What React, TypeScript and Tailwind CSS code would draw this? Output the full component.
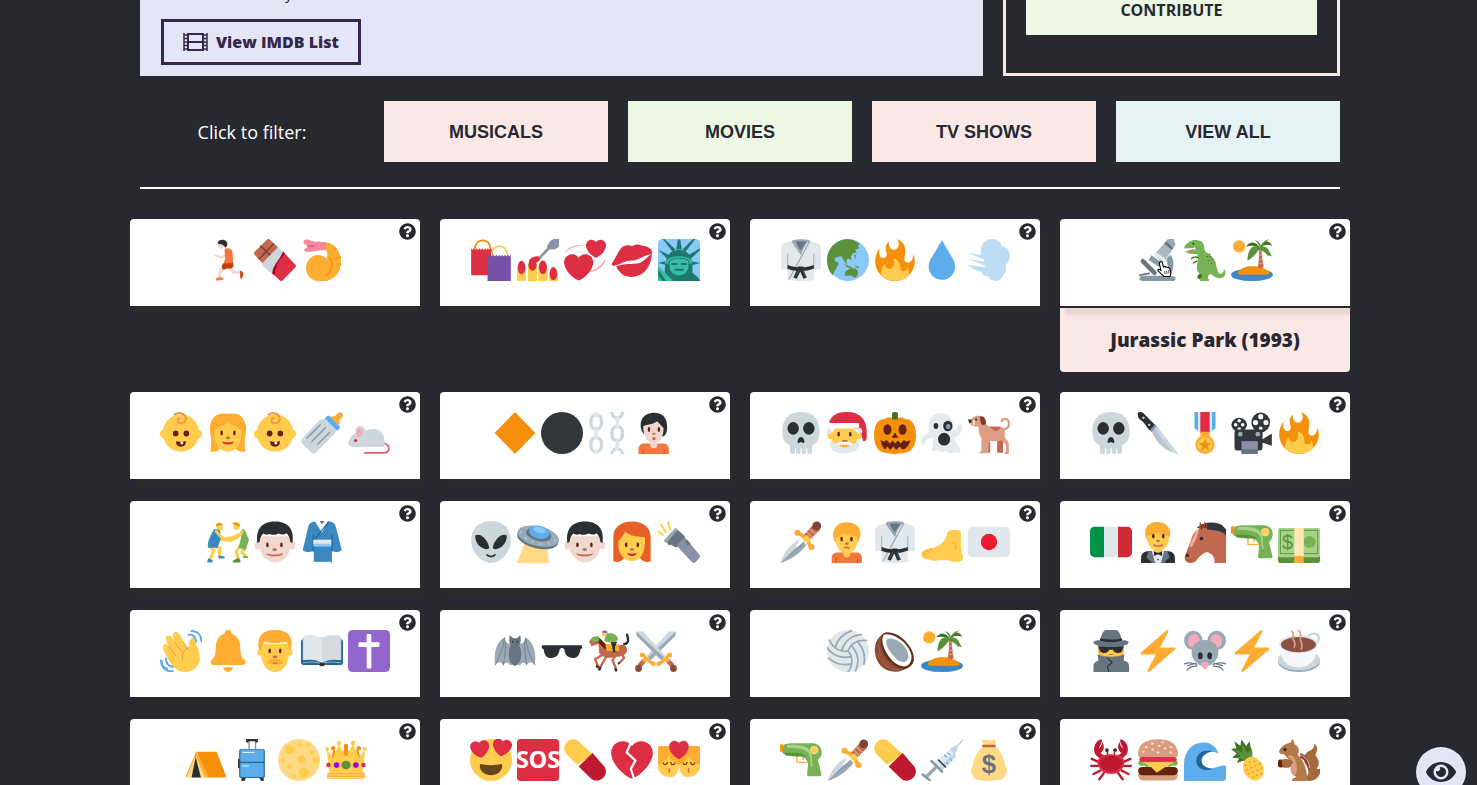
import type { ReactNode } from "react";
import { FaEye, FaQuestionCircle } from "react-icons/fa";

type ShapeProps = { f: string; d: string };
const P = ({ f, d }: ShapeProps) => <path fill={f} d={d} />;
const S = ({ f, d, w = 1 }: ShapeProps & { w?: number }) => (
  <path fill="none" stroke={f} strokeWidth={w} strokeLinecap="round" strokeLinejoin="round" d={d} />
);
const E = ({ f, x, y, a, b = a }: { f: string; x: number; y: number; a: number; b?: number }) => (
  <ellipse fill={f} cx={x} cy={y} rx={a} ry={b} />
);
const R = ({ f, x, y, w, h, r = 0 }: { f: string; x: number; y: number; w: number; h: number; r?: number }) => (
  <rect fill={f} x={x} y={y} width={w} height={h} rx={r} />
);

const HEART =
  "M35.885 11.833c0-5.45-4.418-9.868-9.867-9.868-3.308 0-6.227 1.633-8.018 4.129-1.791-2.496-4.71-4.129-8.017-4.129-5.45 0-9.868 4.417-9.868 9.868 0 .772.098 1.52.266 2.241C1.751 22.587 11.216 31.568 18 34.034c6.783-2.466 16.249-11.447 17.617-19.959.17-.721.268-1.469.268-2.242z";

const Eyes = ({ y, l = 13, r = 23 }: { y: number; l?: number; r?: number }) => (
  <>
    <E f="#662113" x={l} y={y} a={1.1} b={2.1} />
    <E f="#662113" x={r} y={y} a={1.1} b={2.1} />
  </>
);

const baby = (
  <>
    <E f="#ffcc4d" x={2.8} y={18.8} a={2.8} b={3.4} />
    <E f="#ffcc4d" x={33.2} y={18.8} a={2.8} b={3.4} />
    <E f="#ffcc4d" x={18} y={18} a={15.6} b={16} />
    <S f="#ef9645" w={1.7} d="M12.5 2.2c3.5-2.4 9-1.2 9.6 3 .5 3.400-3 5.400-5.600 4.200-2.300-1.100-1.800-4 .3-4" />
    <E f="#662113" x={13.4} y={18.4} a={2.4} b={2.6} />
    <E f="#662113" x={22.6} y={18.4} a={2.4} b={2.6} />
    <P f="#662113" d="M14 24.800c2.500 1 5.500 1 8 0 .7 2.800-1 4.900-4 4.900s-4.700-2.100-4-4.900z" />
    <R f="#fff" x={17.6} y={25.300} w={2.200} h={2.400} r={0.4} />
  </>
);

const fire = (
  <>
    <P f="#f4900c" d="M35 19c0-2.062-.367-4.039-1.04-5.868-.46 5.389-3.333 8.157-6.335 6.868-2.812-1.208-.917-5.917-.777-8.164.236-3.809-.012-8.169-6.931-11.794 2.875 5.5.333 8.917-2.333 9.125-2.958.231-5.667-2.542-4.667-7.042-3.238 2.386-3.332 6.402-2.333 9 1.042 2.708-.042 4.958-2.583 5.208-2.84.28-4.418-3.041-2.963-8.333C2.52 10.965 1 14.805 1 19c0 9.389 7.611 17 17 17s17-7.611 17-17z" />
    <P f="#ffcc4d" d="M28.394 23.999c.148 3.084-2.561 4.293-4.019 3.709-2.106-.843-1.541-2.291-2.083-5.291s-2.625-5.083-5.708-6c2.25 6.333-1.247 8.667-3.08 9.084-1.872.426-3.753-.001-3.968-4.007C7.352 23.668 6 26.676 6 30c0 .368.023.73.055 1.09C9.125 34.124 13.342 36 18 36s8.875-1.876 11.945-4.91c.032-.36.055-.722.055-1.09 0-2.187-.584-4.236-1.606-6.001z" />
  </>
);

const gi = (
  <>
    <P f="#e1e8ed" d="M11 1.500 4 3.600C2 4.300 1 5.500 1 8v18h5.500v9.200c6 1.100 16 1.100 22.500 0V26H35V8c0-2.500-1-3.700-3-4.400L25 1.500z" />
    <P f="#66757f" d="M12.500 1.500h11L18 12z" />
    <P f="#99aab5" d="M11 .8C15 0 21 0 25 .8l1 1.700-1.700.500C20 1.700 16 1.700 12.500 2.500l6.500 9.300-1.200 2L10 2.500z" />
    <S f="#99aab5" w={1} d="M25.500 2 8 34M24 1.500l-6.500 9" />
    <S f="#99aab5" w={0.8} d="M6.600 13v12.500M29 13v12.500" />
    <P f="#292f33" d="M6.500 22.300c6.500 2.700 16 2.700 22.500 0v3c-3.500 1.500-6 1.900-8.500 2l2.500 5.800-3 1-2.600-6.200-3.100 6.200-2.800-1.100 2.500-5.700c-3 0-5.300-.6-7.500-1.700z" />
    <R f="#292f33" x={15} y={23.500} w={5.400} h={4.500} r={1} />
    <S f="#66757f" w={0.5} d="m16 27-2.500 5M19.500 27l2.500 5" />
  </>
);

const island = (
  <>
    <E f="#3b88c3" x={18} y={30.600} a={18} b={5.400} />
    <P f="#f4900c" d="M6 28.500c2-3.500 7-5.200 12.500-5.200S30 25 33 28.500c.5 1.600-2 2.200-4 2.200H10c-2.500 0-4.700-.600-4-2.200z" />
    <E f="#ffac33" x={7} y={6.300} a={5.200} />
    <P f="#c1694f" d="M23.500 7h3c-.6 6 .3 11 1.500 16.500-1 2-4 2-5 .5 1.200-6 1.300-11 .5-17z" />
    <S f="#e5a189" w={0.8} d="m23.800 10 3 .8M24 13.500l3 .8M23.800 17l3.500.8M23.500 20.500l4 .8" />
    <P f="#5c913b" d="M24.500 7.500C19 4 14.500 8 14 18.500c3.500-1.600 7-5 10-9.500 4 1.500 7 2.500 7.500 6 3.500-4-.4-9.500-6-8.500z" />
    <P f="#3e721d" d="M24.800 7.800C22 2.500 17 .7 12.800 6.500c4.700-1.200 8-.9 12 1.300 3.500-3 6.700-3.600 10.500-1.800C33 .2 26.700.8 24.800 7.800z" />
    <P f="#5c913b" d="M24.800 7c-1.500-3.200-3-5-4.500-6 3 .3 5 2.400 5.400 5.500C27.500 2.500 29.500.5 33 .2c-3.500 1.600-4.700 4.500-6.600 7.300 2.600-.3 6 .5 8.600 7.500-3.200-.9-6-2.700-8.500-6z" />
  </>
);

const skull = (
  <>
    <P f="#ccd6dd" d="M34 16C34 6 28 0 18 0S2 6 2 16c0 6 1 10 6.500 12.500V34c0 2.700 4.300 2.700 4.300.2v-2.700c0-1 1-1 1 0V34c0 2.700 3.800 2.700 3.800 0v-2.500c0-1 1-1 1 0V34c0 2.700 3.800 2.700 3.800 0v-2.500c0-1 1-1 1 0v2.700c0 2.500 4.100 2.500 4.100-.2v-5.500C33 26 34 22 34 16z" />
    <E f="#292f33" x={11.300} y={14} a={4.900} b={5.400} />
    <E f="#292f33" x={24.700} y={14} a={4.900} b={5.400} />
    <P f="#292f33" d="M18 21.500c2 0 3.300 3.300 2.800 4.600-.8 1-2 0-2.800-.300-.8.300-2 1.300-2.800.3-.5-1.300.8-4.600 2.800-4.600z" />
  </>
);

const boy = (
  <>
    <E f="#f1d8cf" x={3} y={21} a={2.500} b={3.500} />
    <E f="#f1d8cf" x={33} y={21} a={2.500} b={3.500} />
    <P f="#f1d8cf" d="M4 13h28c1 12-4 22-14 22.500C8 35 3 25 4 13z" />
    <P f="#292f33" d="M3 19C1.500 9 5 .5 18 .5S34.500 9 33 19l-2-1.500c0-3.500-1.500-5-3-7-2 1.500-5 1.200-7 .2-2 1.300-5.500 1.500-7.500.4-2 1.100-4 .8-5.500-.3-2 2-3 4-3 6.700z" />
    <Eyes y={20.500} l={11.500} r={23.500} />
    <E f="#c1694f" x={17.700} y={24.500} a={2} b={1.200} />
    <P f="#c1694f" d="M10.500 27.600c4 1.500 10.500 1.500 14.500 0-.5 3.600-14 3.600-14.500 0z" />
  </>
);

const dagger = (
  <>
    <P f="#ccd6dd" d="M17 15.500C8 21 3 27 .5 36L12 26z" />
    <P f="#99aab5" d="M22.500 20.500C17 28 9 33 .5 36L20 17.500z" />
    <P f="#8899a6" d="M14 23 1 35.500 21 19z" />
    <P f="#c1694f" d="m20 12.500 9-10 5.500 5-10 9.500z" />
    <S f="#e5a189" w={1.200} d="m23 9.500 5 5M25.500 7l4.500 4" />
    <E f="#804434" x={31.500} y={4.200} a={3.800} />
    <S f="#ffac33" w={3.200} d="M15.500 10.500c4 1.500 8 5 10.500 11" />
    <E f="#ffac33" x={15} y={10} a={2.600} />
    <E f="#ffac33" x={27} y={22.300} a={2.600} />
    <P f="#ffcc4d" d="m23 12 4 3.500-3.500 4-4.500-4z" />
  </>
);

const pistol = (
  <>
    <S f="#ffac33" w={1.200} d="M14.500 13v7h8.500M19 13.500l1 4" />
    <P f="#77b255" d="M3 5Q6 3.600 9 3.600H28C33 4 36 7 35.700 12c-.2 3-1.700 4.500-3.200 6l3 12c.3 1.500-.5 2-2 2H25c-1.500 0-2-.8-1.700-2.200l.7-8C23.500 17 20 14.500 14 14H5L2 12z" />
    <P f="#a6d388" d="M6 5.200c8-.6 15 .3 18.500 3.300 4 3.500 2.500 9.500 3.500 15.500h-1.500c-.7-6 0-10-2.800-12.700C20.500 8.500 14 7.500 6 7.500z" />
    <P f="#5c913b" d="M4 11.800h9c4 0 7.500 1.200 9.500 3.200H14l-9-.8z" />
    <R f="#f4900c" x={0} y={4.500} w={2.800} h={6.500} r={1} />
    <E f="#ffd983" x={29.300} y={9.500} a={3.600} />
    <E f="#ffcc4d" x={29.300} y={9.500} a={2.500} />
  </>
);

const pill = (
  <>
    <P f="#ffcc4d" d="M11 22 2.200 13C-.8 9.500-.2 5.500 2.700 2.500 5.500-.3 10-.6 13 2.300l12 11.200z" />
    <P f="#be1931" d="m12.500 23.500 12-11.500L34 23c2.700 3 2.500 7.300-.4 10.300-3 3-7.300 3.300-10.500.5z" />
  </>
);

const zap = (
  <P f="#ffac33" d="M32.938 15.651C32.792 15.26 32.418 15 32 15H19.925L26.89 1.458c.219-.426.106-.947-.271-1.243C26.437.071 26.218 0 26 0c-.233 0-.466.082-.653.243L18 6.588 3.347 19.243c-.316.273-.43.714-.284 1.105S3.582 21 4 21h12.075L9.11 34.542c-.219.426-.106.947.271 1.243.182.144.401.215.619.215.233 0 .466-.082.653-.243L18 29.412l14.653-12.655c.317-.273.43-.714.285-1.106z" />
);

const chain = (x: number, flip: boolean) => (
  <>
    {(flip ? [-7, 12.500, 31.500] : [2.500, 22]).map((y) => (
      <rect key={y} x={x - 4.500} y={y} width={9} height={12} rx={4.500} fill="none" stroke="#ccd6dd" strokeWidth={2.800} />
    ))}
    {(flip ? [3.500, 22.500] : [-6, 12.500, 32]).map((y) => (
      <R key={y} f="#e1e8ed" x={x - 1.600} y={y} w={3.200} h={11} r={1.600} />
    ))}
  </>
);

const shoulders = (skin: string, x: number) => (
  <g transform={`translate(${x - 16} 0)`}>
    <P f="#f4783c" d="M3 36v-4c0-3.500 2-5 5-5h16c3 0 5 1.500 5 5v4z" />
    <S f="#c94e1d" w={0.7} d="M7 32v4M25 32v4" />
    <R f={skin} x={13} y={23} w={6} h={8} r={3} />
  </g>
);

const sword = (
  <>
    <P f="#ccd6dd" d="M1 1.500 6.500 1 26 22l-3.500 4L1.500 5z" />
    <P f="#99aab5" d="M1 1.500 25 23.500 22.500 26 1.500 5z" />
    <S f="#ffac33" w={2.600} d="M20.500 28.500c2-.5 6-4 8.500-7.500" />
    <E f="#ffac33" x={20.300} y={29} a={2} />
    <E f="#ffac33" x={30} y={21.500} a={2} />
    <P f="#c1694f" d="m26.500 27 2.500-2.500 5 5-3 3z" />
    <E f="#8a4b38" x={33} y={33} a={2.900} />
    <E f="#ffac33" x={28} y={26} a={1.500} />
  </>
);

const kissFace = (
  <>
    <R f="#ffac33" x={0} y={6} w={18} h={18} r={1.500} />
    <P f="#ffcc4d" d="M0 22c5-1.500 8-4 9-8 2 4 5 6.500 9 8-.5 5-2 10-6.500 10.500C5 33 1 29 0 25z" />
    <S f="#662113" w={0.900} d="M4.500 20.500c.5 2 3 2 3.500-.5M11 20c.5 2.500 3 2.500 3.500.5" />
    <P f="#e0664f" d="M9 25c2 0 2 1.500 1 2 1 .6 1 2.300-1 2z" />
  </>
);

const volleyballPanel = (
  <S f="#99aab5" w={1.500} d="M18 18C20 12 26 8 34 9M12.500 17.800C15 10 21 4.500 29.500 4M7 15C9 8 14 3 21 .5" />
);

const tRexSpots = [
  [20, 15], [22.500, 15], [24.500, 17.500], [21, 18.500], [26.500, 20], [23.500, 21], [22, 13],
];
const bunSeeds = [
  [8, 7], [13, 4], [13.500, 9], [19, 6], [22, 3], [24, 8], [29, 7], [5.500, 11], [18, 11.500], [29, 11.500],
];
const moonSpots: [number, number, number][] = [
  [10, 9, 4], [18.500, 5, 2], [20, 17.500, 3.600], [10, 23.500, 1.900], [22, 29, 4.200], [32.500, 18.500, 2.600],
  [29, 11, 1.800], [4, 18, 1.600], [14, 32, 1.700], [26, 4.500, 1.800],
];

const art: Record<string, ReactNode> = {
  baby, fire, gi, island, skull, boy, dagger, pistol, pill, zap,
  runner: (
    <>
      <S f="#f1d8cf" w={1.900} d="m7.300 14.200 5 1.800 4.500-2.500M20.500 10l1.500 6-2 4" />
      <S f="#f1d8cf" w={2.600} d="M14 24l-2.500 4-1 5M20 25l3 3.500h6" />
      <P f="#f4783c" d="M15 8.500c3-1.500 6-.3 6.700 2.500L22.500 22c-1 1.500-7 1.800-8.500.5l1.500-6z" />
      <P f="#c63d10" d="M14 20.800h8.500c.5 3-.3 4.500-3 4.500h-2.200l-3 1c-2-1-2-3.500-.3-5.500z" />
      <P f="#f4783c" d="M8 33.500c2-.6 3.500-1.300 6 0v1.500c-2 .2-4.300.7-6.500.6z" />
      <P f="#c94e1d" d="M28.200 27.500c1.500 0 3 .3 3 2.500-.3 1.800-.6 3-1.500 4l-1.200-.4z" />
      <E f="#f1d8cf" x={12} y={5} a={2.500} b={3.400} />
      <P f="#292f33" d="M9.300 2.500C11 0 15 0 16.700 2.200c1.500 2 .8 4.500-1.200 5.200-1-2.500-3-3.200-6.200-3.300z" />
    </>
  ),
  chocolate: (
    <>
      <P f="#c1694f" d="M.4 11.200 11 .6c.8-.8 1.800-.8 2.600 0L21 7.500 8 21.500.4 13.500c-.6-.7-.6-1.600 0-2.300z" />
      <S f="#804434" w={1.500} d="M5.800 6.200 15 15M16.500 4.500 4.500 17" />
      <P f="#ccd6dd" d="M20.500 7 26 11.500 16 30.500 7.500 23c-1-1-.3-1.500-.3-2.500z" />
      <P f="#dd2e44" d="m25 11 10.500 11c.7.7.7 1.500 0 2.200L24.500 35.500c-.6.6-1.500.6-2.100 0L15.700 29.500z" />
      <P f="#a0041e" d="m25 11 1.500 1.500c-5 5-7.500 10-9 18.300l-1.800-1.300c.3-7 5.300-10 9.300-18.500z" />
    </>
  ),
  shrimp: (
    <>
      <P f="#ffac33" d="M20 2.600C28 3 34.300 10 34.300 19.500 34.300 29 28 36 19.500 36H15C9 36 4.300 31 4.300 25S9 13.800 14.500 13.800c3 0 5.500 1 7.500 3 1-4 .5-8-2.500-8.300z" />
      <P f="#f4900c" d="M23 14c4 6 4 14-3.500 18 7 0 9-8 6.500-15zM27.500 17.500l6.500-3v1.500zM30 21l4.300.3v1.500zM27 10l3-3 .8.900z" />
      <P f="#f4899f" d="M2.500 1.500C4-.2 6.500.2 8.500 1.500c4 1.400 7 .6 12.500 1.300.8 2 .3 4.500-1 7.200-5-1-7.500 1.200-12.500 1C4 11.500 2 10.500 3 8.500L7 6 3 4.500c-1-.8-1.200-2-.5-3z" />
      <S f="#dd5a77" w={1.200} d="M5.500 6h5" />
    </>
  ),
  bags: (
    <>
      <S f="#f4900c" w={1.500} d="M4 9c0-10 13.500-11 13.500 0" />
      <P f="#dd2e44" d="M1 8l1.200 1.500L3.400 8l1.200 1.500L5.800 8 7 9.500 8.200 8l1.200 1.500L10.600 8l1.200 1.500L13 8l1.200 1.500L15.400 8l1.200 1.500L17.800 8l1.700 1.500V31H1z" />
      <S f="#ffcc4d" w={1.500} d="M18.500 14c0-10.500 13.500-10.500 13.500 0" />
      <P f="#7450a8" d="M15 13.500l1.200 1.500 1.300-1.500 1.200 1.500 1.300-1.500 1.200 1.500 1.300-1.500 1.200 1.500 1.300-1.500 1.200 1.500 1.300-1.500 1.200 1.500 1.300-1.500 1.200 1.500 1.300-1.500 1.200 1.500 1.300-1.500V36H15z" />
    </>
  ),
  nails: (
    <>
      <P f="#ffcc4d" d="M0 27c0-6 7.500-6 7.500 0v9H0zM9.300 24c0-6 8-6 8 0v12h-8zM18.300 26c0-6 8-6 8 0v10h-8zM27.500 30c0-4 7.500-4 7.500 0v6h-7.500z" />
      <E f="#dd2e44" x={3.900} y={24.500} a={3.300} b={5.800} />
      <E f="#dd2e44" x={13.300} y={22} a={3.500} b={5.200} />
      <E f="#dd2e44" x={22.200} y={24.300} a={3.400} b={5.800} />
      <E f="#dd2e44" x={31.200} y={29.700} a={3.200} b={5.600} />
      <P f="#dd2e44" d="M10.500 19c.5-3 3-3 5-4 2-.8 5 0 5 1.500-1 2.500-3 3.500-5.500 4.500z" />
      <S f="#8899a6" w={2.400} d="M20 15.500 28 7" />
      <P f="#8a91a6" d="M25.800 7c.5-3 3.500-7 6.200-7h4v6c-1 2-3.500 3.500-7.500 3z" />
    </>
  ),
  hearts: (
    <>
      <P f="#f4abba" d="M.5 12C3 6.500 11 4 19 5.500 11 5.500 5 7.500.5 12zM36 16c-1.500 8-8 12.500-15 12 6-2 11-5 15-12z" />
      <g transform="translate(0 11.700) scale(.7)"><P f="#dd2e44" d={HEART} /></g>
      <g transform="translate(18.800 -.2) scale(.48)"><P f="#dd2e44" d={HEART} /></g>
    </>
  ),
  lips: (
    <>
      <P f="#dd2e44" d="M.5 21.500C3 18 6 11 9 7.500c2.500-2.500 6-2.700 9.500-1.500 2.500-1.700 5-1.700 7.500-.5 4 .5 7.500 1.500 9 4.500.5 12-6 22.500-18 22.500-7 0-10-4-13-9.500-1.500.5-3.500 0-3.500-1.500z" />
      <P f="#fff" d="M3 22.700c5-.4 8.500-4.400 14.500-4.200 6 0 10.500-5 17.500-5.500-4 1.500-6.500 7-13 8C14.500 22 10 20.500 3.500 24z" />
    </>
  ),
  liberty: (
    <>
      <R f="#88c9f9" x={0} y={0} w={36} h={36} r={4} />
      <P f="#1b7a6c" d="M10 14 0 9l9 9zM12.500 11 4 0h1.500l9.500 9zM15.500 9 17 .5h2L20.500 9zM21 9l9-9h2l-8.500 11zM26 14l10-6v1.500L27 18zM6 19l-6 1.500L6 22zM29 19l7 1.500-7 2z" />
      <P f="#1b7a6c" d="M6 36C5 20 7 9.500 18 9.500S30 20 29.500 29c2.500 2 5 4 6.500 6v1H6z" />
      <P f="#37bda4" d="M7 19c3-5.500 19-5.500 22 0v2H7z" />
      <P f="#1b7a6c" d="M9 19c3-4 15-4 18 0v2H9z" />
      <P f="#37bda4" d="M10 19c4-3 12-3 16 0v6c-1.500 4-4 6-8 6s-7-2-8-6zM0 23l4 4 9 9H0z" />
      <P f="#1b7a6c" d="M11.500 20.500h5v1.800h-5zM19.500 20.500h5v1.800h-5zM14 25.500h8v1.700h-8zM0 26l7 10H4L0 31z" />
    </>
  ),
  globe: (
    <>
      <E f="#88c9f9" x={18} y={18} a={18} />
      <P f="#5c913b" d="M12 1c3-1 8-1 11 0 2 1 3 2 5 3l-1.500 2 1 2-3.500 1 1.500 2.500-3 .5-2 3 .5 3.500-3-2-1.500 2 1 4-3-4-2.500-4-3 1-2.500 1 .5 2.500 3 1.500C8.500 25 7 26 5 31 1.500 28 0 23 0 18c0-8 5-14.500 12-17z" />
      <P f="#5c913b" d="M15.500 28c2-1 3-3 5-2.800 2-.7 3 .5 4-.2 1 1.500 2.500 3 2.200 4.500-.7 2-1.500 3.500-3.200 3.500l-3-1.800-5 .5zM15 21.500l3 1.500 4 1.500-1 .8-4-1.300zM23 22.500l4 1.200v1.800zM23 14l1.500-1v4.500z" />
    </>
  ),
  droplet: <P f="#5dadec" d="M18 1 8.200 17.400C3.800 25.500 9 35 18 35s14-9.500 9.500-17.600z" />,
  wind: <P f="#bdddf4" d="M11 13.500C10 4.500 15 0 20.500 0c5 0 8 3 8.500 6.200 4.500.3 7 4 7 8 0 3.500-1.500 6.500-4 8 1.500 3 .5 7-2 9-1 3-3 4.800-6 4.800-3.500 0-5-1-6.500-4-3 .5-5-.8-6-4C7 27.500 3.500 25 0 22l14.500 2.200v-1.500L0 17.200l14 2.400v-1.800L0 12z" />,
  microscope: (
    <>
      <P f="#8899a6" d="M3 32c3-.8 17-.4 18-.5 7-3 6-11 3.500-14l4-4c5 6 2 15.500-1 18.500 4.500-.2 5.500 0 5.500 2 0 1.600-1 2-2.500 2H5c-2.500 0-4-1-2-4z" />
      <S f="#66757f" w={3.800} d="M5 19 15 29" />
      <S f="#66757f" w={1.500} d="m2.500 31 8-1.500" />
      <P f="#aab8c2" d="m15 13 8-9 7 6-8.500 11z" />
      <P f="#8899a6" d="m12.500 14 9.500 7-3 3-9-6z" />
      <P f="#e1e8ed" d="m16 11 10 7-2 2.500L14 13.500z" />
      <P f="#99aab5" d="m23 4 3.500-4 5 0 1.500 5-3.500 5z" />
      <P f="#66757f" d="m25 2 6 6-1 1.300L23.500 4z" />
    </>
  ),
  trex: (
    <>
      <P f="#3e721d" d="M13 22c-3 4 0 5.500 1 7l-2.500 3c-.7 2 1 2.500 3.500 2.300l3-8z" />
      <P f="#77b255" d="M.5 6.500C3 2 8 .5 12 1c4.500.5 5.500 4 5.500 8 1 3 5 3.800 8 8 3 4.500 2 11 5 12.500 2.500 1 4-1.500 3.500-4 2.500 2 2 7-2 8-4 1-7-2-9-3.500-2 .5-2.700 2-2.500 4 1.500.3 1.700 2-.5 2h-6c-1.500-1-1-2.500 1-2.500l.5-3c-3-.5-4.500-3-4.500-6 0-4 1.500-7 .5-11.500L4 12.500.5 11l7-1.500C9 7.500 3 9 0 8z" />
      <P f="#fff" d="m1 8.300 7-.6 1-1 1 2.500-8 2 .5-1.500z" />
      <S f="#dd5a55" w={1} d="M3 10.500 8.500 9" />
      <E f="#292f33" x={8} y={4} a={0.8} />
      <S f="#3e721d" w={1.200} d="M12 16c-2-1-5-.7-5.500 1M11 19l-3 1.500" />
      {tRexSpots.map(([x, y]) => <E key={`${x}-${y}`} f="#3e721d" x={x} y={y} a={0.6} />)}
    </>
  ),
  girl: (
    <>
      <P f="#ffac33" d="M2.500 33.500c1.800-3 .7-6 1.200-10C3.200 20 2 15.500 2.600 12 4 4 9 0 18 1.800 27 0 32 4 33.400 12c.6 3.500-.6 8-1.100 11.500.5 4-.6 7 1.200 10-3.500 1.200-7.500.5-9.500-3H12c-2 3.500-6 4.200-9.500 3z" />
      <P f="#ffcc4d" d="M18 9.500c4.500 2 8 3.500 11.500 6C30.500 25 26.500 34 18 34S5.500 25 6.500 15.500C10 13 13.500 11.500 18 9.500z" />
      <Eyes y={18} l={12.500} r={23.500} />
      <E f="#c1694f" x={18} y={22.200} a={1.800} b={1.100} />
      <P f="#df1f32" d="M13 25.500c3 .8 7 .8 10 0-.5 3.200-9.500 3.200-10 0z" />
    </>
  ),
  bottle: (
    <>
      <P f="#ccd6dd" d="m21 5.500 9.500 9.500c-1 4-4.500 6-6.500 8.500L13 34.500c-1 1.500-2.800 1.500-4 .5L1 27c-1-1-1-3 0-4L12 11c3-3 5-5.500 9-5.500z" />
      <S f="#8899a6" w={1.300} d="M16.500 11 5 22.500M21 13.500 9 25.500M24.500 17.500l-10 10" />
      <P f="#5dadec" d="M20.500 5.500c1-2 3-3 4-2l8.500 8.500c.8 1-.3 3.500-2 4z" />
      <P f="#ffac33" d="M25 4c4 0 5-.8 6-2.500 2-2.500 5.500-1.500 4.700 2-.2 2-2.200 2-2.700 3.500-.3 1.500.5 2 0 3.500L31.500 11z" />
    </>
  ),
  rat: (
    <>
      <S f="#ea596e" w={1.600} d="M31.500 27c5 2 4.500 8-1 8H14.500" />
      <P f="#ccd6dd" d="M0 27c1.500-5 3.500-7.500 7-9.500-.8-3.500 0-5.500 3-5.500 2.500 0 4.500 1.500 5 4 2.500-1.500 5-1.500 8-1.500 6 .3 9 6 8.300 15.500H5c-2.500-.3-4-1-5-3z" />
      <E f="#f4abba" x={9.800} y={17.500} a={2.700} b={3.600} />
      <E f="#dd2e44" x={6.500} y={24.500} a={1.400} />
    </>
  ),
  diamond: <P f="#f4900c" d="M18 0 35.500 18 18 36 .5 18z" />,
  circle: <E f="#31373d" x={18} y={18} a={18} />,
  chains: <>{chain(7, false)}{chain(25, true)}</>,
  pale: (
    <>
      {shoulders("#f1d8cf", 16)}
      <P f="#292f33" d="M8 19c-3-2-3.500-7-3-10C6 3.500 11 .5 16.500.7 23.500.7 27.500 5 27.500 12c.2 5-1 8-3.500 9z" />
      <P f="#f1d8cf" d="M7 12c4-1 10-2 12-4l5.500 6c0 7-3 13-8.500 13S7 21 7 12z" />
      <Eyes y={15} l={12} r={20.500} />
      <E f="#c1694f" x={16.200} y={18.700} a={1.500} b={0.9} />
      <E f="#c1694f" x={16.200} y={22.800} a={1.500} b={1.400} />
    </>
  ),
  santa: (
    <>
      <P f="#dd2e44" d="M2 10C2 4 8 0 17 0c12 0 17 7 17 17v5c0 2-1 3-3 3l-3-10z" />
      <E f="#ffcc4d" x={3} y={20} a={2.500} b={3.300} />
      <E f="#ffcc4d" x={27} y={20} a={2.500} b={3.300} />
      <R f="#ffcc4d" x={4} y={12} w={22} h={20} r={9} />
      <P f="#e1e8ed" d="M0 18c-1-3 1-4.500 3-4.500l1 5.500zM30 18c1-3-1-4.500-3-4.500L26 19zM3 23c2 3 3 5 6 3.500 3-1.500 8-1.500 12 0 3 1.500 5 0 6-3.500 2 8-2 12.500-12 12.500S1 31 3 23z" />
      <P f="#fff" d="M1.500 9.500h26v4.700h-26zM9 26.500c2.500-2 9.500-2 12 0v2H9z" />
      <Eyes y={19} l={10} r={20} />
      <P f="#c1694f" d="M13 24h4.500v1.500H13z" />
      <P f="#ffac33" d="M10.500 28h9c-1 3-8 3-9 0z" />
    </>
  ),
  pumpkin: (
    <>
      <P f="#f4900c" d="M18 6c3-2 7-1.500 9 0 6 0 9 6 9 14 0 9-4 15-10 15-3 1.300-13 1.300-16 0C4 35 0 29 0 20 0 12 3 6 9 6c2-1.500 6-2 9 0z" />
      <P f="#3e721d" d="M15.500 1c1-1.500 4-1.500 5 0v5.500h-5z" />
      <E f="#662113" x={11.500} y={15} a={3.400} b={4.600} />
      <E f="#662113" x={24.500} y={15} a={3.400} b={4.600} />
      <P f="#662113" d="m18 17.500 2.700 4.500h-5.400zM5.500 24l3 1.500L11 24l2.500 3 2.500-2.500 2.200 2.500 2.300-2.500 2.500 2.500 2.500-3 2.500 1.500 3-1.500c-1 5-3.500 8-7 8l-2-2.500-3 3-2.500-3-2.500 3-2.500-3-2 2.500C9 32 6.500 29 5.500 24z" />
    </>
  ),
  ghost: (
    <>
      <P f="#e6eaee" d="M7 17C5 7 9 1 16.500.8 25 .7 27.500 7 28 15.500c3 1.500 3-3 4-4.500 1.500-2 4 0 3.500 3-1 4.500-3.500 7-7 8 0 4 3.500 6.500 5 9 1.500 3.500-1.500 5.500-4 3-2 2.500-6 1.500-8-.5-2.500 1.800-5.500.5-7-1-3 2-6.500 1-5-3 .7-2 1-4 .5-7.500-3 .5-5.500 1.500-6.300 4.500-.7 2.500-3.700 2-3.700-1C0 21 4 19 7 17z" />
      <E f="#292f33" x={12.800} y={12} a={2} b={2.500} />
      <E f="#292f33" x={23} y={12} a={4} b={4.600} />
      <E f="#8899a6" x={23.300} y={12.500} a={2} b={2.300} />
      <E f="#292f33" x={19.800} y={23.300} a={5.200} b={5.500} />
    </>
  ),
  dog: (
    <>
      <S f="#dd9e85" w={2} d="M31 15c4-1 5-4.500 3.500-7.500-1.500-2.500-5-2-5.500.5" />
      <P f="#c1694f" d="M15 22h4v13h-4zM25 24h5v11h-5z" />
      <P f="#dd9e85" d="M1 7.500C3 6.500 4 4 7 3.500c3.500-1 7 1 8 5.500 1.500 3.500 4 4 9 4 4-.5 7-.5 7.500 3v5.500c1 2 3.500 4 3.500 6v8.500h-4l.3-1.200 1.200-.5V28l-4-3.500c-3 1-7.500.5-9.500.3l-1.500 3.700V34l-.5 1.300H9.500L10 34l1.500-.5V22c-2-2-2.500-6-2.500-9.500-3 .3-6-.3-8-3z" />
      <P f="#803c2c" d="M10 4c3.500-1.500 5.500 2 5.500 5.500-2 3-4 2-4.500 0z" />
      <P f="#c1694f" d="M19 12.500h9c-1 5-7 5-9 0z" />
      <P f="#292f33" d="M0 6.500h3V9L1 9.500z" />
      <E f="#292f33" x={7} y={6.500} a={0.9} />
      <S f="#fff" w={1.200} d="M5 10.500v-3" />
    </>
  ),
  knife: (
    <>
      <P f="#ccd6dd" d="m17 12 18.500 24C27 34.500 19 29 12.500 17.500z" />
      <P f="#b9c5cd" d="m13 17.500 2-2.500 16 20C23 32 17.500 26.500 13 17.500z" />
      <P f="#292f33" d="M.5 1C2-.5 4-.2 5.500 1L16 11.500 12 16C9 15 8.500 12 6.500 10 4 7 2 6.500 1 4.500z" />
      <P f="#8899a6" d="m15 11 2 1.500-4.500 5L11 15.700z" />
      <E f="#ccd6dd" x={5.500} y={5} a={1} />
      <E f="#ccd6dd" x={10.500} y={11} a={1} />
    </>
  ),
  medal: (
    <>
      <P f="#55acee" d="M9 0h18v14l-5 3.500h-8L9 14z" />
      <P f="#e1e8ed" d="M12 0h12v16l-3 2h-6l-3-2z" />
      <P f="#dd2e44" d="M14 0h8v18h-8z" />
      <R f="#ffac33" x={14} y={17} w={8} h={4} r={1} />
      <E f="#ffac33" x={18} y={28} a={8.300} b={8} />
      <E f="#ffcc4d" x={18} y={28} a={6.200} b={6} />
      <P f="#f4900c" d="m18 22.500 1.500 3.800 4 .3-3 2.600 1 4-3.500-2.200-3.500 2.200 1-4-3-2.600 4-.3z" />
    </>
  ),
  camera: (
    <>
      <E f="#31373d" x={7} y={11} a={6.700} b={6} />
      <E f="#31373d" x={25.500} y={9} a={8} b={8.500} />
      {[[7, 7.500], [4, 11], [10, 11], [7, 14.500], [25.500, 4], [21, 9], [30, 9], [25.500, 14]].map(([x, y]) => (
        <E key={`${x}-${y}`} f="#fff" x={x} y={y} a={y === 4 || x === 21 || x === 30 ? 2.200 : 1.500} />
      ))}
      <R f="#31373d" x={3} y={15} w={24} h={18} r={2.500} />
      <P f="#31373d" d="m26 24 9-5.500v10.500l-9-3z" />
      <P f="#8a91a6" d="M9 25h14v10H9z" />
      <P f="#66708a" d="M9 32h14v4H9z" />
      <E f="#99aab5" x={8} y={19} a={2} />
      <E f="#99aab5" x={23} y={19} a={2} />
    </>
  ),
  wrestlers: (
    <>
      <S f="#ffcc4d" w={2.600} d="M10 13l3 3h5M3 22l3 3-3 7M8 22l3 1-.5 7" />
      <S f="#ffcc4d" w={2.600} d="M26 12l-4 2-4.500 2.500M33 22l-3 5 3 3M28 22l-3 4 2 7" />
      <P f="#3b88c3" d="M6 7h5l1 8-3 8H1c-1-4 1-9 5-16zM1 32l4 1.500-.5 2H0zM10 29.500l5 1v1.700h-5z" />
      <P f="#77b255" d="M30 7h2l4 9-3 9-6-2 2-8zM31 30h4v1.700h-4z" />
      <P f="#5c913b" d="m22 34 5-2.500 2 3-1 1h-6z" />
      <S f="#ffcc4d" w={2.500} d="M8 9c2 3 4 5 7 6.500l4-1M30 9c-2 3-3 5-6 6l-4 2" />
      <E f="#ffcc4d" x={11} y={5} a={2.500} b={3.300} />
      <E f="#ffcc4d" x={25} y={4.500} a={2.500} b={3.300} />
      <P f="#f4900c" d="M7.500 5c0-4 4-4.500 5.700-2L10 4zM28.500 5c0-4-4-5-7-3l4 2z" />
    </>
  ),
  kimono: (
    <>
      <P f="#fff" d="M13 0h9l3 3-8 9L11 3z" />
      <P f="#66757f" d="M16 0h4l-2 3z" />
      <P f="#3b88c3" d="M12 .5 18 10l5-9.500c4 0 6 1 7 5L35 25c-3 2-6 2-8.500.5V36H11V25.500C7.500 27 4 27 1.500 25L6 5.500C7 2 9 .8 12 .5z" />
      <S f="#226699" w={1} d="M10.500 12v14M26.500 12v14M23.500 1 11.500 16" />
      <R f="#e1e8ed" x={10.500} y={16} w={15.500} h={4} />
      <R f="#88c9f9" x={10.500} y={19.500} w={15.500} h={2.400} />
      <P f="#fff" d="M11 35h15v1H11z" />
    </>
  ),
  alien: (
    <>
      <P f="#ccd6dd" d="M35 17c0 10-9 19-17 19S1 27 1 17C1 6 8 0 18 0s17 6 17 17z" />
      <P f="#292f33" d="M4.500 12.500c4-3 11 3.500 12 10.500-1 3.500-12.500-.5-12-10.500zM31.500 12.500c-4-3-11 3.500-12 10.500 1 3.500 12.500-.5 12-10.500z" />
      <S f="#292f33" w={1.400} d="M14.500 29c1.500 2 5.500 2 7 0" />
    </>
  ),
  ufo: (
    <>
      <P f="#ffd983" d="M7 18h18l2.500 18H0z" />
      <g transform="rotate(13 18 14)">
        <E f="#66757f" x={18} y={15} a={18} b={8.500} />
        <E f="#99aab5" x={18} y={13} a={18} b={8.500} />
        <E f="#66757f" x={18} y={11.500} a={11} b={5.500} />
        <E f="#5dadec" x={18} y={9.500} a={9} b={5.500} />
        <E f="#88c9f9" x={18} y={7.500} a={5.500} b={2.600} />
        {[3, 8, 14.500, 21.500, 28, 33].map((x, i) => <E key={x} f="#88c9f9" x={x} y={[13, 17, 19, 19, 17, 13][i]} a={1.100} />)}
      </g>
    </>
  ),
  redhair: (
    <>
      <P f="#e85f25" d="M2 34.500V14C2 5 9 .5 18 .5S34 5 34 14v20.500c-3.500 1.500-7 .5-9-2.500H11c-2 3-5.500 4-9 2.500z" />
      <P f="#ffcc4d" d="M12 9c4 4 11 4.500 17 5 1 10-2 20.500-11 20.500S5 24 6.500 17C9 14.500 11 12 12 9z" />
      <Eyes y={20.500} l={13} r={23} />
      <E f="#c1694f" x={18} y={24.500} a={1.800} b={1.100} />
      <P f="#df1f32" d="M14 27.500c2.500.8 5.500.8 8 0 0 3.500-8 3.500-8 0z" />
    </>
  ),
  flashlight: (
    <>
      <P f="#66757f" d="M5 17 15 6l8 7v5l-4 4-4 .5z" />
      <P f="#99aab5" d="M5 17 15 6l2 1.500L7 19z" />
      <P f="#8a91a6" d="m16 21 7-7 12.500 15c.7 1 .5 2-.3 3l-3.500 3.500c-1 .8-2 .5-3-.5z" />
      <P f="#66757f" d="m8 19.500 9.500-11 2 1.500L10 21zM23 18l2-1.800 3 3.300-2 1.500z" />
      <S f="#ffcc4d" w={1.700} d="M10.500 7.500 8.500 1M6.500 9.500 2.500 3M4 12 .5 9" />
    </>
  ),
  frown: (
    <>
      {shoulders("#ffcc4d", 17)}
      <P f="#ffac33" d="M7 18C3 11 6 1.500 16 1c9-.5 14 5 12.500 12.500L26 19z" />
      <P f="#ffcc4d" d="M7.500 14c3-.5 5-2 6-3.500 4 2 8 2.500 12.500 2.500 1 8-2.500 14.500-9 14.500S7 21.500 7.500 14z" />
      <Eyes y={15.500} l={12.500} r={21} />
      <E f="#c1694f" x={17} y={19.500} a={1.600} b={1} />
      <S f="#c1694f" w={1.100} d="M15 23c1-.5 3-.5 4 0" />
    </>
  ),
  foot: (
    <>
      <P f="#ffcc4d" d="M23 9c3-1.500 8-1.500 11-.5.8 7-1 14 2 22 .5 4-3 4.500-7 4.500-5 0-6-2.500-12-1.500-4 1-7 .5-10-.5-4 0-7-2-6.500-4.500 0-3 3.500-4.500 7.500-5C14 22.500 21 19 23 9z" />
      <S f="#ef9645" w={0.8} d="M28 19c2 1 3 3 1.500 5.500M1.500 28l2.500.5M4 25.500l2.500 1M7.500 24l2 1" />
    </>
  ),
  japan: (
    <>
      <R f="#e1e8ed" x={0} y={5} w={36} h={26} r={4} />
      <E f="#ed1b2f" x={18} y={18} a={7} />
    </>
  ),
  italy: (
    <>
      <R f="#e1e8ed" x={0} y={5} w={36} h={26} r={4} />
      <P f="#009246" d="M4 5h8v26H4c-2.200 0-4-1.800-4-4V9c0-2.200 1.800-4 4-4z" />
      <P f="#ce2b37" d="M32 5h-8v26h8c2.200 0 4-1.800 4-4V9c0-2.200-1.800-4-4-4z" />
    </>
  ),
  groom: (
    <>
      <P f="#292f33" d="M3.500 36v-4c0-4 2.500-6 6-6h17c3.500 0 6 2 6 6v4z" />
      <P f="#66757f" d="M10 26h4l3 10h-4l-5-5zM26 26h-4l-3 10h4l5-5z" />
      <P f="#e1e8ed" d="M12.500 25h11l-3 11h-5z" />
      <P f="#ffcc4d" d="M14.500 21h7v5c-2 2-5 2-7 0z" />
      <P f="#292f33" d="m14.500 26 3 1.300h1L21.500 26v4l-3-1.300h-1l-3 1.300z" />
      <E f="#292f33" x={18} y={33} a={0.7} />
      <P f="#ffac33" d="M8.500 16C5 10 7 1 17 .8c9 0 13 6.500 11 13l-2 4z" />
      <P f="#ffcc4d" d="M8.500 12c4 1 7-.5 9-3 3 2.500 5 3 10 4 .5 6-3 12.500-9.500 12.500S8.500 19 8.500 12z" />
      <Eyes y={13} l={14} r={22.500} />
      <E f="#c1694f" x={18} y={17} a={1.600} b={1} />
      <S f="#c1694f" w={1.200} d="M14.500 20.500c2 1.500 5.500 1.500 7.500 0" />
    </>
  ),
  horse: (
    <>
      <P f="#31373d" d="M11 6c6-6 17-5.500 21.500-2.500L36 7v8l-7-3-11-5z" />
      <P f="#c1694f" d="m13.500.5 3 5.500 1-5.500c2.500 2 2.500 4 2 6.500C28 8 34 9 36 12.500V36H26c1-5-2-8-6-9.500-4 1-5.500 3-8 5.500-1.500 3.500-4 4-7.500 4-3-.5-5-3-3.500-6.500C3 24 4.500 21 6.500 15 8 10 10 8 13 7z" />
      <P f="#f1a893" d="m10 9 3-2.500c-.5 5-3 11-6.500 16l-2-1z" />
      <P f="#662113" d="m14 1 2 5-1.500 2zM18 1c1.500 2 1.500 4 1 5.500L17.500 6z" />
      <E f="#292f33" x={15} y={15} a={1.600} />
      <E f="#662113" x={2.800} y={29.500} a={1.500} b={1.600} />
      <S f="#804434" w={0.7} d="M2 33c2 1.500 4 .5 5-.5" />
    </>
  ),
  money: (
    <>
      <R f="#5c913b" x={0} y={25} w={36} h={11} r={2} />
      <R f="#a6d388" x={0} y={6} w={36} h={25} r={1.500} />
      <rect x={2} y={8} width={32} height={20} fill="none" stroke="#5c913b" strokeWidth={0.8} />
      <E f="#77b255" x={27} y={18} a={5.200} />
      <text x={3.500} y={24} fontFamily="Liberation Sans" fontSize={17} fill="#5c913b">$</text>
      <R f="#ffe8b6" x={14} y={6} w={8} h={25} />
      <R f="#ffac33" x={14} y={30} w={8} h={6} />
    </>
  ),
  wave: (
    <>
      <P f="#ffcc4d" d="M3 13c1-2 3-1 4.500 1C5 9 4 6 6.500 5s4 1 6.500 6C11 6 10 3 12.500 2s4 .5 7.500 8c2 3.500 3.500 5 5.500 5.500-1-4-.5-7 2-9 2.500-1.500 3 .5 3 3 0 3 3 7 3.500 12.500C35 30 29 36 21.500 36 14 36 9 29 7 25c-2-4-5.500-9-4-12z" />
      <S f="#ef9645" w={0.8} d="m7.500 14 6 8M12.500 10.500l6 8M20 10l4 7M25 15c-5 1-6.500 5.500-5.500 11" />
      <S f="#5dadec" w={1.700} d="M24.500 4c4-.5 6 2.500 6.500 6M27 .8c5.500.2 8.500 4 8.500 9M6 33c-3-.5-4.500-3-4.500-6.500M11 35.200C5 36 1 32 .8 26M5 24.500c.2 4 2.500 6.500 6 7" />
    </>
  ),
  bell: (
    <P f="#ffac33" d="M18 0c2 0 3 1.200 3 3.200 5 1.500 7.500 6 7.500 12 0 6 1.500 8.800 3.500 10.300 1.500 1.300 1 4.500-1 4.500H5c-2 0-2.500-3.200-1-4.500 2-1.500 3.500-4.300 3.500-10.300 0-6 2.500-10.500 7.500-12C15 1.200 16 0 18 0zM14 32h8c0 5.300-8 5.300-8 0z" />
  ),
  moustache: (
    <>
      <E f="#ffcc4d" x={5} y={19} a={2} b={3} />
      <E f="#ffcc4d" x={31} y={19} a={2} b={3} />
      <P f="#ffcc4d" d="M6 12h24c1 12-2 24-12 24S5 24 6 12z" />
      <P f="#ffac33" d="M4.500 17C2 7 6 0 18 0s16 7 13.500 17H30c0-4-1.500-6-3-7-5 1.500-13 1.500-18 0-1.500 1.500-3 3.500-3 7z" />
      <Eyes y={18} l={13.500} r={22.500} />
      <E f="#c1694f" x={18} y={23} a={2.200} b={1.200} />
      <P f="#ffac33" d="M18 25c2-1.500 5.500 0 7 3.500-4 1.500-10 1.500-14 0 1.500-3.500 5-5 7-3.500z" />
      <P f="#c1694f" d="M15.500 28h5c-.5 1.500-4.500 1.500-5 0z" />
    </>
  ),
  book: (
    <>
      <R f="#226699" x={0} y={8} w={36} h={22} r={2} />
      <P f="#ccd6dd" d="M1.500 6h33v20c-6-1-12-.5-16.500 2.500C13.500 25.500 8 25 1.500 26z" />
      <P f="#e1e8ed" d="M2.500 5C9 3.500 14.500 4 18 7.500V28C14.500 25 8.500 24.500 2.500 25.500z" />
      <P f="#d3dbe0" d="M33.500 5C27 3.500 21.500 4 18 7.500V28c3.500-3 9.500-3.500 15.500-2.500z" />
      <S f="#99aab5" w={0.9} d="M2 28c7-1 12-1 16 1 4-2 9-2 16-1" />
      <P f="#292f33" d="M16 28h4v3h-4z" />
    </>
  ),
  cross: (
    <>
      <R f="#9266cc" x={0} y={0} w={36} h={36} r={4} />
      <R f="#fff" x={16} y={3.500} w={4} h={29.500} r={0.8} />
      <R f="#fff" x={9} y={10.500} w={18} h={4} r={0.8} />
    </>
  ),
  bat: (
    <>
      <P f="#99aab5" d="M1 30C-.5 20 2 10 9 6.500c0 4 3 6 9 6s9-2 9-6C34 10 36.500 20 35 30c-3-3.500-5-3-7 0-2-2.500-4-2.500-5.500 0h-9c-1.500-2.500-3.500-2.500-5.500 0-2-3-4-3.500-7 0z" />
      <S f="#66757f" w={0.6} d="M9 7C8 16 5 22 1 30M9 7c2 8 0 15-1 23M27 7c1 9 4 15 8 23M27 7c-2 8 0 15 1 23" />
      <P f="#66757f" d="m13.500 4.500 3 2.500h3l3-2.500c.8 4 .5 7-1 8.500 3 5 2 14-1 16l-2.500 2-2.500-2c-3-2-4-11-1-16-1.500-1.500-1.800-4.500-1-8.500z" />
      <E f="#292f33" x={16} y={10} a={0.7} />
      <E f="#292f33" x={20} y={10} a={0.7} />
    </>
  ),
  shades: (
    <P f="#292f33" d="M1 13h34l.5 2.500-1.700 1C33 22 31 24 27.500 24c-5 0-7-3-7.500-7.500-1.500-1.300-2.500-1.300-4 0C15.500 21 13.500 24 8.500 24 5 24 3 22 2.200 16.500l-1.700-1z" />
  ),
  jockey: (
    <>
      <S f="#292f33" w={2} d="M31 12c4.500 0 3.500-4.500 2.500-8" />
      <S f="#c1694f" w={2} d="M13 21 6 25l2.500 5.500M16 22l-5.500 10M28 19l3 5-4.500 4.500M25 20l-4 6 3 7" />
      <P f="#c1694f" d="M1 10c3-5 7-6 11-1l4 4h11c4-1 6 0 6.500 4 0 4-4 6-9 6-6 1.500-13 1-15-4L9 12l-6 2z" />
      <P f="#662113" d="m9 6 7 7-1 4-6-6z" />
      <P f="#292f33" d="m7.500 29.500 2 2-1 1.500-2-1.500zM9.500 31l2 1.500-1 2.500-2-.5zM22.500 32.500l2.500 1v2h-2zM25.500 27.500l2.500 1-2 1.500z" />
      <P f="#77b255" d="M3 6.500 9 5l1 4-6 1.500z" />
      <P f="#ffac33" d="M15 12h11l1 6H16z" />
      <P f="#292f33" d="M19 10h6l-2 5 .5 4h-2l-1-6z" />
      <P f="#77b255" d="M15 4c3-2 9-2 11 4l-3 2.500h-6l-3-1z" />
      <E f="#ffcc4d" x={14} y={3.500} a={2.200} />
      <P f="#9266cc" d="M11.500 2C13-.8 17-.3 16.800 3z" />
    </>
  ),
  swords: (
    <>
      <g transform="matrix(-1 0 0 1 36 0)">{sword}</g>
      {sword}
    </>
  ),
  tent: (
    <>
      <P f="#f4900c" d="M11 11h17l8 20.500c0 1-.5 1.500-1.500 1.500H20z" />
      <P f="#ffac33" d="M10.500 11 1 32.500c5-.5 5-2 7-6l2.500-9L16 33h6z" />
      <P f="#ffd983" d="M10 14 2 33h16z" />
      <P f="#292f33" d="M10 15.500 14.500 33h-8z" />
      <S f="#99aab5" w={0.7} d="M10 12v5" />
    </>
  ),
  luggage: (
    <>
      <S f="#8899a6" w={1.200} d="M15.500 2v7M21 2v7" />
      <P f="#292f33" d="M13 0h10v3h-2V2h-6v1h-2zM9 33h4l-1.500 3H9zM24 33h4v3h-2z" />
      <R f="#226699" x={7} y={8.500} w={22} h={25} r={1.500} />
      <R f="#5dadec" x={8} y={9} w={20} h={10.500} r={1} />
      <R f="#5dadec" x={8} y={20.500} w={20} h={12} r={1} />
      <S f="#fff" w={0.7} d="M10 11.500h10M10 23h5" />
      <R f="#31373d" x={6} y={17} w={1.400} h={8} />
    </>
  ),
  moon: (
    <>
      <E f="#ffd983" x={18} y={18} a={18} />
      {moonSpots.map(([x, y, r]) => <E key={`${x}-${y}`} f="#ffcc4d" x={x} y={y} a={r} />)}
    </>
  ),
  crown: (
    <>
      <P f="#f4900c" d="M7 9h1.500l1 8h-4zM17 5h2l2 10h-6zM27 9h1.500l2 8h-4z" />
      <E f="#f4900c" x={7} y={8} a={1.900} />
      <E f="#f4900c" x={18} y={6} a={1.900} />
      <E f="#f4900c" x={29} y={8} a={1.900} />
      <P f="#ffcc4d" d="M1.500 9 7 16l5-12 6 12 6-12 5 12 5.500-7-2.300 20H3.800z" />
      <E f="#ffcc4d" x={1.800} y={8.500} a={1.700} />
      <E f="#ffcc4d" x={12} y={3.500} a={1.900} />
      <E f="#ffcc4d" x={24} y={3.500} a={1.900} />
      <E f="#ffcc4d" x={34.200} y={8.500} a={1.700} />
      <P f="#ffac33" d="M2 29h32v5H2z" />
      <S f="#ffe8b6" w={0.7} d="M3 30.800h30M3 33h30" />
      <E f="#5c913b" x={18} y={22.300} a={4} b={3.600} />
      <E f="#9400ed" x={10} y={22.300} a={2.400} />
      <E f="#9400ed" x={26.500} y={22.300} a={2.400} />
      <E f="#dd2e44" x={3} y={22.300} a={1.900} />
      <E f="#dd2e44" x={33} y={22.300} a={1.900} />
    </>
  ),
  hearteyes: (
    <>
      <E f="#ffcc4d" x={18} y={18} a={18} />
      <P f="#65471b" d="M8.500 21.500c6 1.200 13 1.200 19 0 1 6-4 9.500-9.500 9.500s-10.500-3.500-9.500-9.500z" />
      <g transform="translate(.3 .6) rotate(-8 8 8) scale(.46)"><P f="#dd2e44" d={HEART} /></g>
      <g transform="translate(19.200 -.8) rotate(8 8 8) scale(.46)"><P f="#dd2e44" d={HEART} /></g>
    </>
  ),
  sos: (
    <>
      <R f="#dd2e44" x={0} y={0} w={36} h={36} r={3} />
      <text x={18} y={25} textAnchor="middle" fontFamily="Noto Sans" fontWeight={700} fontSize={20} fill="#fff">SOS</text>
    </>
  ),
  broken: (
    <>
      <P f="#dd2e44" d={HEART} />
      <S f="#fff" w={1.900} d="m17.500 2-4 9.500 7.500 7-4 7 3 9.500" />
    </>
  ),
  kiss: (
    <>
      {kissFace}
      <g transform="matrix(-1 0 0 1 36 0)">{kissFace}</g>
      <g transform="translate(9.500 .5) scale(.47 .49)"><P f="#dd2e44" d={HEART} /></g>
    </>
  ),
  volleyball: (
    <>
      <E f="#e1e8ed" x={18} y={18} a={18} />
      {volleyballPanel}
      <g transform="rotate(120 18 18)">{volleyballPanel}</g>
      <g transform="rotate(240 18 18)">{volleyballPanel}</g>
    </>
  ),
  coconut: (
    <>
      <P f="#8a4b38" d="M10 2C2 6-1 14 1.500 23 4 31.500 11 37 21 35.500c8-1.500 13-6 13-10C32 12 18 2 10 2z" />
      <P f="#5d2d16" d="M8 3c-5 6-1 20 9 27 8 5 15 3.500 17-4C36 16 20-2 8 3z" />
      <P f="#fff" d="M8.500 4C4.500 9 10 21 17 27.500c7 5.500 13 5 15-2C34 15 18 1 8.500 4z" />
      <P f="#99aab5" d="M11 8c-2.500 3 2.500 12 9 17.500 5 3.500 9.500 2 9.500-3C29.500 14 17.500 4.500 11 8z" />
      <S f="#c1694f" w={0.6} d="M4 13c0 8 4 14 10 18M3 20c2 6 5 9 8 11M9 30c4 3 8 4 12 4" />
    </>
  ),
  spy: (
    <>
      <P f="#66757f" d="M3 36v-5c0-3 3-4.500 5-5l-1-5h22l-1 5c3 .5 5.500 2 5.500 5v5z" />
      <P f="#ffac33" d="M7 13h22v5c0 4-4 8-11 8S7 22 7 18z" />
      <P f="#ffcc4d" d="M9 16h18l-1 5c-3 3-13 3-16 0z" />
      <P f="#66757f" d="M6.500 21c5 2.500 18 2.500 23 0l-1 7c-5 5-16 5-21 0z" />
      <P f="#292f33" d="M7 14h22l-1.500 4c-2 2.500-6.500 2.500-8-1h-3c-1.500 3.500-6 3.500-8 1z" />
      <S f="#292f33" w={0.9} d="m15 24 4 4-4 3 1 5" />
      <P f="#66757f" d="M9 9C9.500 4 11 1 13.500 0h9c2.500 1 4 4 4.500 9z" />
      <P f="#292f33" d="M8.500 7c6 1.500 13 1.500 19 0v4h-19z" />
      <P f="#66757f" d="M3 10c2-1 3.500-1.500 5.500-1 6 2 13 2 19 0 2-.5 3.500 0 5.500 1 1 3-7 4.500-15 4.500S2 13 3 10z" />
      <P f="#c1694f" d="M16 20.500h4c-.5 1.300-3.500 1.300-4 0z" />
    </>
  ),
  mouse: (
    <>
      <E f="#99aab5" x={8} y={9} a={8} b={8.300} />
      <E f="#99aab5" x={28} y={9} a={8} b={8.300} />
      <E f="#f4abba" x={8.500} y={9.500} a={5} b={6} />
      <E f="#f4abba" x={27.500} y={9.500} a={5} b={6} />
      <P f="#99aab5" d="M18 8.500c6.500 0 11.500 4 11.500 10.500 0 6-4 9-7.500 11.500h-8C10.500 28 6.500 25 6.500 19 6.500 12.500 11.500 8.500 18 8.500z" />
      <E f="#292f33" x={14} y={22} a={2} b={3} />
      <E f="#292f33" x={22} y={22} a={2} b={3} />
      <S f="#66757f" w={1.100} d="M11 29.500C7 28 3 28 .5 29M11 31c-4 0-7 1-8.500 3.500M25 29.500c4-1.500 8-1.500 10.500-.5M25 31c4 0 7 1 8.500 3.500M10 28.500 3 30.500M26 28.500l7 2" />
      <P f="#f4abba" d="M15 28.500c0-1.500 6-1.500 6 0 0 3-1.500 5-3 5s-3-2-3-5z" />
    </>
  ),
  coffee: (
    <>
      <E f="#99aab5" x={18} y={27} a={18} b={9} />
      <E f="#ccd6dd" x={18} y={25.500} a={18} b={9} />
      <E f="#e1e8ed" x={18} y={25} a={12} b={6} />
      <S f="#ccd6dd" w={2} d="M26 5c5-4 11-1 8.500 4-1 3-4 4-6 4" />
      <P f="#f5f8fa" d="M1 12h33c0 11-5 20-16.500 20S1 23 1 12z" />
      <E f="#e1e8ed" x={17.500} y={12} a={16.500} b={8} />
      <E f="#8a5140" x={17.500} y={12.500} a={15} b={6.500} />
      <S f="#dd9e85" w={1.500} d="M12 1c3 4-1 5 1.500 8 1.500 2 1 4 .5 5.500M17.500 0c4 4 .5 6 2 9 1.500 3 1 5 .5 7.500" />
    </>
  ),
  syringe: (
    <>
      <S f="#8899a6" w={0.7} d="m35.500 1-9 11" />
      <P f="#b9d7eb" d="M25.500 8.500c2-2 6-4 6-2s-.5 4-2 5.500L30 15 17 28l-7-7z" />
      <P f="#dcebf5" d="m25 9 3 3-12 12-4.500-4z" />
      <S f="#292f33" w={1.200} d="m15 18 6 6" />
      <S f="#66757f" w={0.8} d="m20 14 2 1.500M23 12l2 1.500M22 20l1.500 1.500M25 17l1.500 1.500" />
      <S f="#99aab5" w={3} d="M12 25 5 32" />
      <S f="#8899a6" w={2.200} d="m9 19 9 9M1.500 30.500l6 5" />
    </>
  ),
  moneybag: (
    <>
      <P f="#ffd983" d="M12 1c2-1.500 3 .5 6 0 3 .5 4-1.500 6 0l-1.500 5C28 10 31.500 17 31.500 22c3 3 2.500 10-3.500 13-5 1.300-15 1.300-20 0-6-3-6.500-10-3.500-13 0-5 3.500-12 9-16z" />
      <R f="#be6440" x={12} y={5} w={12} h={2} r={1} />
      <text x={18} y={29.500} textAnchor="middle" fontFamily="Liberation Sans" fontWeight={700} fontSize={22} fill="#66757f">$</text>
    </>
  ),
  crab: (
    <>
      <S f="#be1931" w={2} d="M8 20 1.500 17M8 23H1M9 27l-6 3M12 29l-4 5.500M28 20l6.500-3M28 23h7M27 27l6 3M24 29l4 5.500" />
      <P f="#be1931" d="M12 18c-5-2-8.500-4-8.500-9C3.500 4 7 .5 10 .2c.7 3-1.500 5-2.500 8 2-1.500 2.700-3 3-5.700 3 5 .5 8-1.500 9.500 2 1.500 3.500 2 5 4zM24 18c5-2 8.500-4 8.500-9 0-5-3.500-8.500-6.500-8.800-.7 3 1.500 5 2.500 8-2-1.500-2.700-3-3-5.700-3 5-.5 8 1.500 9.500-2 1.500-3.500 2-5 4z" />
      <E f="#292f33" x={14.500} y={9.500} a={1.600} />
      <E f="#292f33" x={21.500} y={9.500} a={1.600} />
      <S f="#be1931" w={1.300} d="M15 11v4M21 11v4" />
      <P f="#dd2e44" d="M6.500 19c1-4 6-6 11.500-6s10.500 2 11.500 6c0 6-4 11-11.500 11S6.500 25 6.500 19z" />
      <P f="#be1931" d="M8 19c2-3 6-4.500 10-4.500s8 1.500 10 4.500c0 5-4 9-10 9s-10-4-10-9z" />
    </>
  ),
  burger: (
    <>
      <P f="#d99e82" d="M1 30h34c0 4-2 5.500-4 5.500H5c-2 0-4-1.500-4-5.500z" />
      <R f="#662113" x={1} y={24} w={34} h={7} r={3.500} />
      <P f="#77b255" d="M1 20.500c0-2 1-2 2-2h30c1 0 2 0 2 2 0 1.500-2.500 3.500-4 2-2 1.500-4 2-6 0-2 2-4 2-6 0-2 2-4.500 2-6.500 0-2 1.500-5 2-6.500 0C3.500 24 1 22 1 20.500z" />
      <P f="#ffcc4d" d="M5 20h27l-7 3.500L17 29l-5-5z" />
      <R f="#dd2e44" x={2} y={15.500} w={32} h={4} r={2} />
      <P f="#d99e82" d="M.8 13C1 4 8 .2 18 .2S35 4 35.200 13c0 1.700-1 2.500-2.500 2.500H3.300C1.800 15.500.8 14.700.8 13z" />
      {bunSeeds.map(([x, y]) => <E key={`${x}-${y}`} f="#ffe8b6" x={x} y={y} a={1.100} b={0.9} />)}
    </>
  ),
  ocean: (
    <>
      <P f="#5dadec" d="M0 36V22C0 10.500 7 3 17 3c6 0 11.500 4 12.500 10-2.500-2-5.500-2.500-8-1.500-4 1.500-6.500 4-6.500 7.500 0 4.500 6 7.500 12 5.500 3-1 5.500-2.500 9-1.500v10.500c0 1.500-1 2.500-2.500 2.500z" />
      <P f="#226699" d="M24.500 10.500c-7.500-2.500-14 2-14 8 0 6.500 7 10 14.500 7.200-6-.7-10-3.200-10-7.200 0-4 4.500-7.500 9.500-8z" />
    </>
  ),
  pineapple: (
    <>
      <P f="#3e721d" d="m14 20 4-6-2-12-3 4L9 .5 8 6 3 2l1.500 6L0 8.500l5 4-4 3.500 6 .5-2 4 6-2z" />
      <P f="#5c913b" d="m14 20 4.500-3.500L18 8l-4 4-5-9 1 9-8-5 6 8-5 1 6 1z" />
      <g transform="rotate(-25 19 25)">
        <E f="#ffcc4d" x={19} y={25.500} a={8.500} b={10.500} />
        <S f="#f4900c" w={1} d="M14 20h1M18 19h1M22 20h1M13 24h1M17 24h1M21 24h1M25 24h1M13 28h1M17 28h1M21 28h1M25 28h1M15 32h1M19 32h1M23 32h1" />
      </g>
    </>
  ),
  squirrel: (
    <>
      <P f="#a7693b" d="M21 33c7-1 6-7 2-12-2-6 0-9 4-11 4-1.500 4.500-5 4-6 4 2 2.500 7 1 10 3.500 4 4 8 1 11.500 3 1 4-.5 3.500-1.500C37 30 34 36 26 36z" />
      <P f="#b27a46" d="M1 10c2-3.500 5-6 10-7l1-3c2 1.500 2 3 2 4.500 5 2 4 7 3 9.500 6 5 8 14 8 20.500 0 1-.5 1.500-1.500 1.500H12c0-2.500 2-3 4-3.500-5-2-7-6-3-11L5 13C2 13 .5 12 1 10z" />
      <P f="#d99e82" d="M8 14c3 3 5 8 3 14l3 3.500c4-5 2-12-1-17z" />
      <P f="#804434" d="M19 12c7 2 9 9 8 16-1.500-4-2-9-8-12z" />
      <S f="#d99e82" w={1.100} d="M19 13.500c5 2 8 6 8 11" />
      <E f="#292f33" x={6} y={9} a={1.400} />
      <E f="#662113" x={2.500} y={21} a={3} b={3.500} />
      <P f="#a7693b" d="M3 18c4-2 8 0 10 1l-2 5c-3 1-6 1-7 0z" />
    </>
  ),
};

function Emoji({ name }: { name: string }) {
  return (
    <svg viewBox="0 0 36 36" className="size-[42px] overflow-hidden" aria-hidden="true">
      {art[name]}
    </svg>
  );
}

function PointerHand() {
  return (
    <svg viewBox="0 0 15 17" className="absolute top-[22px] left-5 h-[17px] w-[15px]" aria-hidden="true">
      <path
        fill="#fff"
        stroke="#000"
        strokeWidth="1.100"
        strokeLinejoin="round"
        d="M3 1c1-.8 2.200-.3 2.400.8L6.500 6c.6-.7 1.700-.6 2.100.2.700-.5 1.700-.3 2 .5.800-.4 1.900 0 2.200.900l1 3.400c.3 1.500-.2 3-.8 4.500H6.800C5.500 13.500 3 12 1 9.800.6 8.600 1.700 8 2.700 8.600l1.200.9L2.400 2.500C2.200 1.900 2.500 1.300 3 1z"
      />
      <path stroke="#000" strokeWidth=".7" d="m7.500 10 .6 3.300M9.500 9.700l.6 3.300M11.500 9.300l.5 3.200" />
    </svg>
  );
}

type Puzzle = { emojis: string[]; answer?: string };

const puzzles: Puzzle[] = [
  { emojis: ["runner", "chocolate", "shrimp"] },
  { emojis: ["bags", "nails", "hearts", "lips", "liberty"] },
  { emojis: ["gi", "globe", "fire", "droplet", "wind"] },
  { emojis: ["microscope", "trex", "island"], answer: "Jurassic Park (1993)" },
  { emojis: ["baby", "girl", "baby", "bottle", "rat"] },
  { emojis: ["diamond", "circle", "chains", "pale"] },
  { emojis: ["skull", "santa", "pumpkin", "ghost", "dog"] },
  { emojis: ["skull", "knife", "medal", "camera", "fire"] },
  { emojis: ["wrestlers", "boy", "kimono"] },
  { emojis: ["alien", "ufo", "boy", "redhair", "flashlight"] },
  { emojis: ["dagger", "frown", "gi", "foot", "japan"] },
  { emojis: ["italy", "groom", "horse", "pistol", "money"] },
  { emojis: ["wave", "bell", "moustache", "book", "cross"] },
  { emojis: ["bat", "shades", "jockey", "swords"] },
  { emojis: ["volleyball", "coconut", "island"] },
  { emojis: ["spy", "zap", "mouse", "zap", "coffee"] },
  { emojis: ["tent", "luggage", "moon", "crown"] },
  { emojis: ["hearteyes", "sos", "pill", "broken", "kiss"] },
  { emojis: ["pistol", "dagger", "pill", "syringe", "moneybag"] },
  { emojis: ["crab", "burger", "ocean", "pineapple", "squirrel"] },
];

function Card({ emojis, answer }: Puzzle) {
  return (
    <article className="min-h-[89px]">
      <div className="relative z-10 rounded-t bg-white pt-5 pb-[25px] shadow-[5px_9px_2px_rgba(90,50,20,0.09)]">
        <div className="flex justify-center gap-[5px]">
          {emojis.map((name, i) => (
            <div key={i} className="relative">
              <Emoji name={name} />
              {name === "microscope" && <PointerHand />}
            </div>
          ))}
        </div>
        <button type="button" aria-label="Show answer" className="absolute top-1 right-1 text-[#282830]">
          <FaQuestionCircle className="size-[17px]" />
        </button>
      </div>
      {answer && (
        <p className="mt-0.5 overflow-hidden rounded-b bg-[#fae8e7] py-[18px] text-center text-[19px] leading-7 font-extrabold">
          {answer}
        </p>
      )}
    </article>
  );
}

const filters = [
  { label: "MUSICALS", color: "bg-[#fae8e7]" },
  { label: "MOVIES", color: "bg-[#ecf8e3]" },
  { label: "TV SHOWS", color: "bg-[#fae8e7]" },
  { label: "VIEW ALL", color: "bg-[#e5f3f9]" },
];

export default function App() {
  return (
    <div className="h-screen overflow-hidden bg-[#282830] pl-[3px] font-['Open_Sans',sans-serif] text-[#282830]">
      <header className="mx-auto flex max-w-[1200px] gap-5">
        <section className="flex flex-1 flex-col items-start bg-[#e5e5f8] px-[21px] pb-[11px]">
          <p className="-mt-[21px] mb-3 pl-[124px] text-base leading-7">y</p>
          <a
            href="#imdb"
            className="flex h-[46px] items-center gap-2 border-3 border-[#35294a] px-[19px] text-base font-extrabold text-[#35294a]"
          >
            <svg viewBox="0 0 25 20" className="h-5 w-[25px]" fill="none" stroke="currentColor" aria-hidden="true">
              <path strokeWidth="2" d="M5 2h15v16H5zM5 10h15" />
              <path strokeWidth="1.500" d="M1 1v18M24 1v18M1 3h4M1 6.500h4M1 10h4M1 13.500h4M1 17h4M20 3h4M20 6.500h4M20 10h4M20 13.500h4M20 17h4" />
            </svg>
            View IMDB List
          </a>
        </section>
        <section className="w-[337px] border-x-3 border-b-3 border-[#fae8e7] px-5">
          <button type="button" className="-mt-4 block h-[51px] w-full bg-[#ecf8e3] text-base font-bold">
            CONTRIBUTE
          </button>
        </section>
      </header>

      <nav className="mx-auto mt-[25px] grid max-w-[1200px] grid-cols-5 items-center gap-5 border-b-2 border-white pb-[25px]">
        <span className="text-center text-lg text-white">Click to filter:</span>
        {filters.map(({ label, color }) => (
          <button
            key={label}
            type="button"
            className={`h-[61px] font-['Liberation_Sans',Arial,sans-serif] text-lg font-bold ${color}`}
          >
            {label}
          </button>
        ))}
      </nav>

      <main className="mx-auto mt-[30px] grid max-w-[1220px] grid-cols-4 gap-5">
        {puzzles.map((puzzle, i) => (
          <Card key={i} {...puzzle} />
        ))}
      </main>

      <button
        type="button"
        aria-label="Toggle all answers"
        className="fixed right-[11px] -bottom-3 z-20 flex size-[50px] items-center justify-center rounded-full bg-[#e5e5f8] text-[#282830]"
      >
        <FaEye className="size-[30px]" />
      </button>
    </div>
  );
}
